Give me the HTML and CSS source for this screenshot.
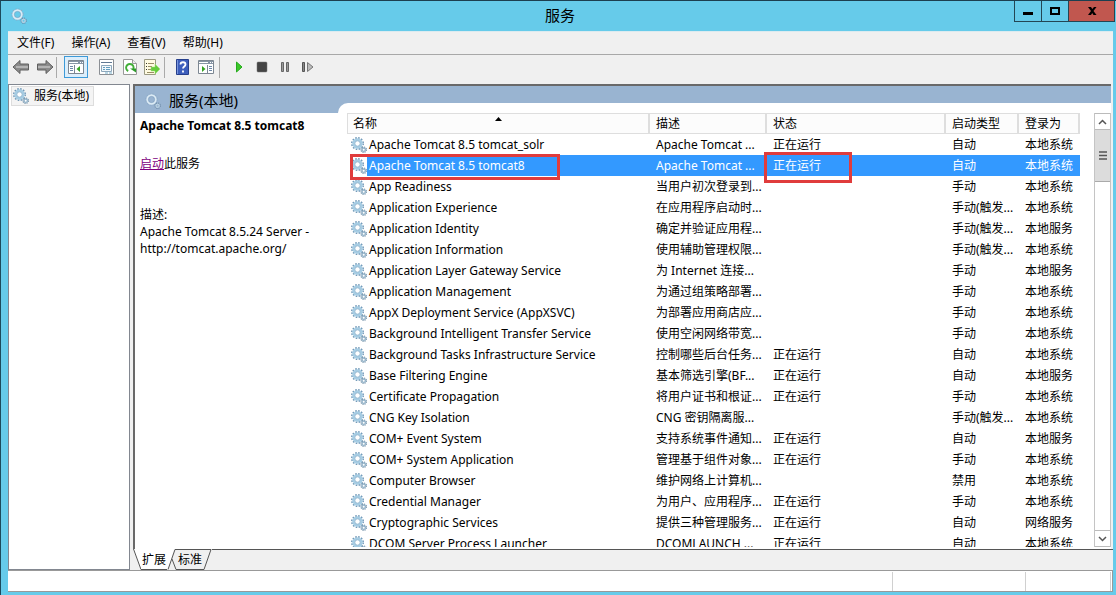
FILE: index.html
```
<!DOCTYPE html>
<html lang="zh-CN">
<head>
<meta charset="utf-8">
<title>服务</title>
<link rel="stylesheet" href="styles.css">
</head>
<body>
<svg class="defs" aria-hidden="true">
  <defs>
    <symbol id="gears" viewBox="0 0 16 16">
      <circle cx="6.5" cy="6.5" r="5.7" fill="none" stroke="#7299b8" stroke-width="1.6" stroke-dasharray="1.6 1.38"/>
      <circle cx="6.5" cy="6.5" r="4" fill="#fff" stroke="#a6cde4" stroke-width="2.4"/>
      <circle cx="6.5" cy="6.5" r="2.700" fill="#fff" stroke="#7ea8c6" stroke-width=".8"/>
      <circle cx="12.700" cy="12.700" r="2.700" fill="none" stroke="#6c8ba3" stroke-width="1.2" stroke-dasharray="1.2 .92"/>
      <circle cx="12.700" cy="12.700" r="1.700" fill="#fff" stroke="#93b3c9" stroke-width="1.4"/>
    </symbol>
    <symbol id="rings" viewBox="0 0 16 16">
      <circle cx="6.5" cy="6.5" r="5.5" fill="none" stroke="#8aa9c6" stroke-width="1.3" stroke-dasharray="1.5 1.38"/>
      <circle cx="6.5" cy="6.5" r="4.200" fill="none" stroke="#dcebf5" stroke-width="2"/>
      <circle cx="6.5" cy="6.5" r="3.100" fill="none" stroke="#7f9fbd" stroke-width=".6"/>
      <circle cx="12.6" cy="12.700" r="2.6" fill="none" stroke="#6986a3" stroke-width="1.2" stroke-dasharray="1.2 .84"/>
      <circle cx="12.6" cy="12.700" r="1.6" fill="none" stroke="#b9d1e2" stroke-width="1.3"/>
    </symbol>
  </defs>
</svg>

<header class="titlebar">
  <svg class="title-icon"><use href="#rings"/></svg>
  <h1 class="title">服务</h1>
  <div class="window-buttons">
    <button class="wbtn" aria-label="最小化"><svg width="12" height="12"><path d="M1 7h10v3H1z"/></svg></button>
    <button class="wbtn wbtn-max" aria-label="最大化"><svg width="12" height="12"><path d="M2 3h8v6H2z" fill="none" stroke="#000" stroke-width="2"/></svg></button>
    <button class="wbtn wbtn-close" aria-label="关闭"><svg width="12" height="12"><path d="M2 2h3l1.300 2L8 2h2.500L7.500 6l3 4h-3L6.200 8 5 10H2l3-4z"/></svg></button>
  </div>
</header>

<nav class="menubar">
  <button class="menu">文件(F)</button>
  <button class="menu">操作(A)</button>
  <button class="menu">查看(V)</button>
  <button class="menu">帮助(H)</button>
</nav>

<div class="toolbar">
  <button class="tool tool-nav" aria-label="后退"><svg width="18" height="16"><path d="M1 8l7-6.500V5h8.500v6H8v3.500z" fill="#8b8b8b" stroke="#5f5f5f"/><path d="M4 8h12" stroke="#b4b4b4" stroke-width="2"/></svg></button>
  <button class="tool tool-nav" aria-label="前进"><svg width="18" height="16"><path d="M17 8l-7-6.500V5H1.500v6H10v3.500z" fill="#8b8b8b" stroke="#5f5f5f"/><path d="M2 8h12" stroke="#b4b4b4" stroke-width="2"/></svg></button>
  <span class="sep"></span>
  <button class="tool tool-on" aria-label="显示控制台树"><svg width="16" height="14"><path d="M.5.500h15v13H.5z" fill="#fff" stroke="#7d8792"/><path d="M1 1h14v3H1z" fill="#8795a5"/><path d="M1 2.500h9M12 2.500h1M14 2.500h1" stroke="#fff"/><path d="M6.500 5v8" stroke="#7d8792"/><path d="M2 6.500h3M2 8.500h3M2 10.500h3" stroke="#6d87a8"/><path d="M12 6v6L8.500 9z" fill="#35a322"/></svg></button>
  <button class="tool tool-props" aria-label="属性"><svg width="15" height="16"><path d="M.5.500h14v15H.5z" fill="#fff" stroke="#8b8f94"/><path d="M2 3.500h11" stroke="#5f7893"/><path d="M2.500 6.500h10v6h-10z" fill="#f0f7fb" stroke="#8da7bb"/><path d="M4 8.500h2M7 8.500h4M4 10.500h2M7 10.500h4" stroke="#629dbf"/><path d="M6 14h3M10 14h3" stroke="#77b0cc"/></svg></button>
  <button class="tool" aria-label="刷新"><svg width="14" height="16"><path d="M.5.500h9l4 4v11H.5z" fill="#fff" stroke="#999"/><path d="M9.500 .5v4h4" fill="#eee" stroke="#999"/><path d="M5.200 12A3.700 3.700 0 1 1 10.300 10" fill="none" stroke="#42ae38" stroke-width="2"/><path d="M7 9.500h6v4z" fill="#2d9c2a"/></svg></button>
  <button class="tool tool-export" aria-label="导出列表"><svg width="17" height="16"><path d="M.5.500h11v15H.5z" fill="#fffbe2" stroke="#9b9a83"/><path d="M2 4.500h1M2 7.500h1M2 10.500h1" stroke="#333"/><path d="M4 4.500h6M4 7.500h4M4 10.500h4M3 13.500h7" stroke="#998e66"/><path d="M7 8h4V5l5 5-5 5v-3H7z" fill="#66cc3c" stroke="#a1dc78" stroke-width=".5"/></svg></button>
  <span class="sep"></span>
  <button class="tool tool-help" aria-label="帮助"><svg width="13" height="16"><path d="M.5.500h12v15H.5z" fill="#3d5ebc" stroke="#263f8c"/><path d="M1.500 1v14" stroke="#7a96dc"/><path d="M4.500 5.500c0-3 5-3 5 0 0 2-2.500 2-2.500 4M7 11.500v2" fill="none" stroke="#fff" stroke-width="1.800"/></svg></button>
  <button class="tool tool-pane" aria-label="显示操作窗格"><svg width="16" height="14"><path d="M.5.500h15v13H.5z" fill="#fff" stroke="#7d8792"/><path d="M1 1h14v3H1z" fill="#8795a5"/><path d="M1 2.500h9M12 2.500h1M14 2.500h1" stroke="#fff"/><path d="M9.500 5v8" stroke="#7d8792"/><path d="M11 6.500h3M11 8.500h3M11 10.500h3" stroke="#6d87a8"/><path d="M4 6v6l3.500-3z" fill="#35a322"/></svg></button>
  <span class="sep"></span>
  <button class="tool tool-svc tool-start" aria-label="启动服务"><svg width="12" height="14"><path d="M3.500 2v10L9 7z" fill="#3cc829" stroke="#25ab1d"/></svg></button>
  <button class="tool tool-svc" aria-label="停止服务"><svg width="12" height="14"><rect x="1" y="2" width="10" height="10" rx="1" fill="#444" stroke="#777" stroke-width=".5"/></svg></button>
  <button class="tool tool-svc" aria-label="暂停服务"><svg width="12" height="14"><path d="M2.500 2.500h2v9h-2zM7.500 2.500h2v9h-2z" fill="#999" stroke="#666"/></svg></button>
  <button class="tool tool-svc" aria-label="重启动服务"><svg width="14" height="14"><path d="M1.500 2.500h2v9h-2z" fill="#888" stroke="#555"/><path d="M6.500 2.500v9L12 7z" fill="#bbb" stroke="#777"/></svg></button>
</div>

<main class="workspace">
  <aside class="tree">
    <button class="tree-item"><svg class="gear"><use href="#gears"/></svg>服务(本地)</button>
  </aside>
  <section class="pane">
    <div class="board">
      <div class="details">
        <h2 class="banner"><svg class="gear"><use href="#rings"/></svg>服务(本地)</h2>
        <div class="info">
          <h3 class="service-name">Apache Tomcat 8.5 tomcat8</h3>
          <p class="action"><a href="#">启动</a>此服务</p>
          <p class="desc">描述:<br>Apache Tomcat 8.5.24 Server -<br>http://tomcat.apache.org/</p>
        </div>
      </div>
      <div class="list">
        <div class="rows">
          <table class="services">
            <colgroup><col class="c-name"><col class="c-desc"><col class="c-status"><col class="c-start"><col class="c-login"></colgroup>
            <thead><tr><th class="sorted">名称<svg class="sort" width="7" height="4"><path d="M0 4l3.500-4L7 4z"/></svg></th><th>描述</th><th>状态</th><th>启动类型</th><th>登录为</th></tr></thead>
            <tbody>
              <tr><td><svg class="gear"><use href="#gears"/></svg>Apache Tomcat 8.5 tomcat_solr</td><td>Apache Tomcat ...</td><td>正在运行</td><td>自动</td><td>本地系统</td></tr>
              <tr class="selected"><td class="marked"><span class="gear-box"><svg class="gear"><use href="#gears"/></svg></span>Apache Tomcat 8.5 tomcat8<i class="mark mark-name"></i></td><td>Apache Tomcat ...</td><td class="marked">正在运行<i class="mark mark-status"></i></td><td>自动</td><td>本地系统</td></tr>
              <tr><td><svg class="gear"><use href="#gears"/></svg>App Readiness</td><td>当用户初次登录到...</td><td></td><td>手动</td><td>本地系统</td></tr>
              <tr><td><svg class="gear"><use href="#gears"/></svg>Application Experience</td><td>在应用程序启动时...</td><td></td><td>手动(触发...</td><td>本地系统</td></tr>
              <tr><td><svg class="gear"><use href="#gears"/></svg>Application Identity</td><td>确定并验证应用程...</td><td></td><td>手动(触发...</td><td>本地服务</td></tr>
              <tr><td><svg class="gear"><use href="#gears"/></svg>Application Information</td><td>使用辅助管理权限...</td><td></td><td>手动(触发...</td><td>本地系统</td></tr>
              <tr><td><svg class="gear"><use href="#gears"/></svg>Application Layer Gateway Service</td><td>为 Internet 连接...</td><td></td><td>手动</td><td>本地服务</td></tr>
              <tr><td><svg class="gear"><use href="#gears"/></svg>Application Management</td><td>为通过组策略部署...</td><td></td><td>手动</td><td>本地系统</td></tr>
              <tr><td><svg class="gear"><use href="#gears"/></svg>AppX Deployment Service (AppXSVC)</td><td>为部署应用商店应...</td><td></td><td>手动</td><td>本地系统</td></tr>
              <tr><td><svg class="gear"><use href="#gears"/></svg>Background Intelligent Transfer Service</td><td>使用空闲网络带宽...</td><td></td><td>手动</td><td>本地系统</td></tr>
              <tr><td><svg class="gear"><use href="#gears"/></svg>Background Tasks Infrastructure Service</td><td>控制哪些后台任务...</td><td>正在运行</td><td>自动</td><td>本地系统</td></tr>
              <tr><td><svg class="gear"><use href="#gears"/></svg>Base Filtering Engine</td><td>基本筛选引擎(BF...</td><td>正在运行</td><td>自动</td><td>本地服务</td></tr>
              <tr><td><svg class="gear"><use href="#gears"/></svg>Certificate Propagation</td><td>将用户证书和根证...</td><td>正在运行</td><td>手动</td><td>本地系统</td></tr>
              <tr><td><svg class="gear"><use href="#gears"/></svg>CNG Key Isolation</td><td>CNG 密钥隔离服...</td><td></td><td>手动(触发...</td><td>本地系统</td></tr>
              <tr><td><svg class="gear"><use href="#gears"/></svg>COM+ Event System</td><td>支持系统事件通知...</td><td>正在运行</td><td>自动</td><td>本地服务</td></tr>
              <tr><td><svg class="gear"><use href="#gears"/></svg>COM+ System Application</td><td>管理基于组件对象...</td><td>正在运行</td><td>手动</td><td>本地系统</td></tr>
              <tr><td><svg class="gear"><use href="#gears"/></svg>Computer Browser</td><td>维护网络上计算机...</td><td></td><td>禁用</td><td>本地系统</td></tr>
              <tr><td><svg class="gear"><use href="#gears"/></svg>Credential Manager</td><td>为用户、应用程序...</td><td>正在运行</td><td>手动</td><td>本地系统</td></tr>
              <tr><td><svg class="gear"><use href="#gears"/></svg>Cryptographic Services</td><td>提供三种管理服务...</td><td>正在运行</td><td>自动</td><td>网络服务</td></tr>
              <tr><td><svg class="gear"><use href="#gears"/></svg>DCOM Server Process Launcher</td><td>DCOMLAUNCH ...</td><td>正在运行</td><td>自动</td><td>本地系统</td></tr>
            </tbody>
          </table>
        </div>
        <div class="scrollbar">
          <button class="scroll-btn" aria-label="向上滚动"><svg width="9" height="6"><path d="M1 5l3.500-3.500L8 5" fill="none" stroke="#555" stroke-width="1.500"/></svg></button>
          <div class="thumb"><svg width="8" height="9"><path d="M0 1h8M0 4.500h8M0 8h8" stroke="#555" stroke-width="1.500"/></svg></div>
          <button class="scroll-btn scroll-down" aria-label="向下滚动"><svg width="9" height="6"><path d="M1 1l3.500 3.500L8 1" fill="none" stroke="#555" stroke-width="1.500"/></svg></button>
        </div>
      </div>
    </div>
    <div class="tabs">
      <svg class="tab-edge" width="8" height="21"><path d="M0 0h8v20.500H8L0 0z" fill="#fff"/><path d="M.5 0L8 20.500" stroke="#555"/></svg>
      <button class="tab tab-on">扩展</button>
      <svg class="tab-edge" width="10" height="21"><path d="M0 0h7L1 20.500H0z" fill="#fff"/><path d="M1 20.500L8 .5H10M5 10l4 10.500h1" fill="none" stroke="#555"/></svg>
      <button class="tab">标准</button>
      <svg class="tab-edge" width="9" height="21"><path d="M0 20.500h1L8 .5H0" fill="none" stroke="#555"/></svg>
      <span class="tab-rest"></span>
    </div>
  </section>
</main>
<footer class="statusbar"><span class="status-main"></span><span class="status-mid"></span><span class="status-end"></span></footer>
</body>
</html>
```
FILE: styles.css
```
* { box-sizing: border-box; }
html { height: 100%; }
body {
  margin: 0;
  height: 100%;
  display: flex;
  flex-direction: column;
  padding: 0 3px 3px 7px;
  border-top: 1px solid #1c3f50;
  border-left: 1px solid #1c4a5c;
  background: #66cbea;
  color: #000;
  font: 12px/17px "Noto Sans", "Noto Sans CJK SC", sans-serif;
  overflow: hidden;
}
button { margin: 0; padding: 0; border: 0; background: none; color: inherit; font: inherit; }
h1, h2, h3, p { margin: 0; font-weight: normal; }
.defs { position: absolute; width: 0; height: 0; }
.gear { width: 16px; height: 16px; flex: none; }

.titlebar { display: flex; flex: none; height: 30px; }
.title-icon { width: 16px; height: 16px; margin: 7px 0 0 3px; }
.title { flex: 1; padding: 4px 0 0 79px; text-align: center; font-size: 15px; line-height: 20px; }
.window-buttons { display: flex; align-items: flex-start; margin-right: -2px; }
.wbtn { display: grid; place-items: center; width: 28px; height: 21px; border: 1px solid #234654; border-top: 0; }
.wbtn-max { width: 27px; border-left: 0; }
.wbtn-close { width: 46px; border-left: 0; background: #c1574f; }

.menubar { display: flex; flex: none; align-items: flex-start; gap: 17px; height: 24px; padding-left: 9px; background: #f0f0f0; border-top: 1px solid #dcebf0; border-bottom: 1px solid #a8a8a8; }
.menu { padding-top: 2px; white-space: nowrap; }

.toolbar { display: flex; flex: none; align-items: center; height: 29px; padding: 0 0 5px 4px; background: #f0f0f0; }
.tool { display: grid; place-items: center; flex: none; height: 24px; width: 22px; }
.tool-nav { width: 23px; }
.tool-nav:first-child { width: 18px; margin-right: 3px; }
.tool-on { width: 24px; height: 22px; margin: 0 7px; background: #dceefb; border: 1px solid #3d9ad8; }
.tool-props { margin-right: 2px; }
.tool-export { width: 23px; }
.tool-help { margin-left: 6px; }
.tool-pane { width: 26px; }
.tool-start { margin-left: 7px; }
.tool-svc { width: 23px; }
.sep { width: 1px; height: 21px; background: #aaa; }

.workspace { display: flex; flex: 1; gap: 3px; min-height: 0; background: #f0f0f0; }
.tree { flex: none; width: 122px; padding: 1px 2px; background: #fff; border: 1px solid #828790; }
.tree-item { display: flex; align-items: center; gap: 5px; height: 20px; padding: 0 4px 1px 1px; border: 1px solid #ddd; background: #f4f4f4; white-space: nowrap; }
.pane { display: flex; flex: 1; flex-direction: column; min-width: 0; }
.board { display: flex; flex: 1; min-height: 0; margin-right: 2px; border: solid #696969; border-width: 2px 0 0 2px; background: #99b4d1; }
.details { display: flex; flex: none; flex-direction: column; width: 203px; background: #fff; }
.banner { display: flex; align-items: center; gap: 8px; height: 27px; padding: 2px 0 0 10px; background: #99b4d1; font-size: 15px; }
.info { padding: 4px 0 0 5px; white-space: nowrap; }
.service-name { font-size: 12px; font-weight: bold; }
.action { margin-top: 21px; }
.action a { color: #800080; }
.desc { margin-top: 34px; }

.list { display: flex; flex: 1; min-width: 0; margin-top: 17px; padding: 10px 0 2px 9px; border-top-left-radius: 10px; background: #fff; }
.rows { flex: 1; min-width: 0; overflow: hidden; }
.services { width: 733px; table-layout: fixed; border-collapse: separate; border-spacing: 0; }
.c-name { width: 303px; }
.c-desc { width: 117px; }
.c-status { width: 179px; }
.c-start { width: 73px; }
.c-login { width: 61px; }
.services th, .services td { height: 21px; padding: 0 0 0 6px; line-height: 17px; text-align: left; font-weight: normal; white-space: nowrap; vertical-align: middle; }
.services th { background: #fcfcfc; border: solid #dedede; border-width: 1px 2px 1px 0; }
.services th:first-child { padding-left: 5px; border-left: 1px solid #dedede; }
.services td:first-child { padding-left: 4px; }
.services .gear { margin: -2px 2px 0 0; vertical-align: middle; }
.sorted, .marked { position: relative; }
.sort { position: absolute; top: 3px; left: 50%; margin-left: -3px; }
.services .selected td { background: #3399ff; color: #fff; }
.services .selected td:first-child { padding-left: 0; background: linear-gradient(to right, #fff 20px, #39f 20px); }
.gear-box { padding-left: 4px; }
.mark { position: absolute; border: 3px solid #e03c3c; z-index: 1; }
.mark-name { top: -1px; left: 3px; width: 210px; height: 26px; }
.mark-status { top: -3px; left: -3px; width: 88px; height: 31px; }

.scrollbar { display: flex; flex: none; flex-direction: column; width: 17px; border: solid #c4c4c4; border-width: 0 1px; background: #fff; }
.scroll-btn { display: grid; place-items: center; height: 17px; border: solid #bbb; border-width: 1px 0; background: #fff; }
.scroll-down { margin-top: auto; }
.thumb { display: grid; place-items: center; height: 52px; background: #dcdcdc; border: solid #aaa; border-width: 0 0 1px; }

.tabs { display: flex; flex: none; height: 21px; }
.tab { flex: none; height: 21px; padding: 0 1px; border: solid #555; border-width: 1px 0; white-space: nowrap; }
.tab-on { border-top-color: #fff; background: #fff; }
.tab-edge { flex: none; }
.tab-rest { flex: 1; border-top: 1px solid #555; }

.statusbar { display: flex; flex: none; height: 22px; padding: 1px 1px 0 0; background: #fff; border: solid #999; border-width: 1px 1px 1px 0; }
.status-main { flex: 1; border-right: 1px solid #d0d0d0; }
.status-mid { width: 133px; border-right: 1px solid #d0d0d0; }
.status-end { width: 85px; border-right: 1px solid #d0d0d0; }
```
